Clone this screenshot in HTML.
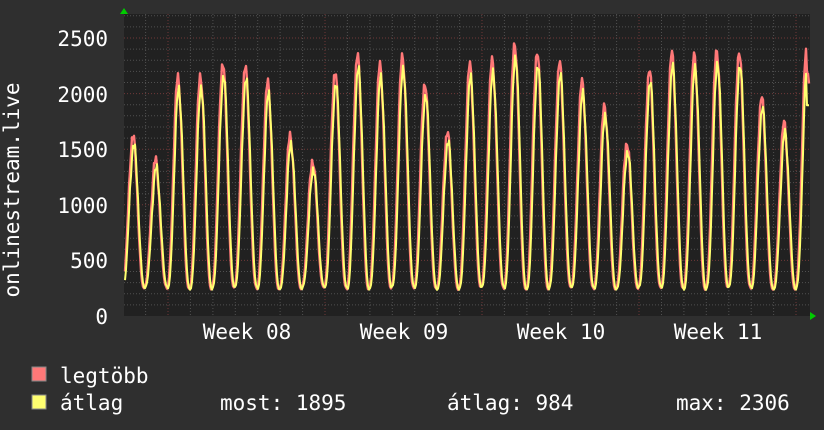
<!DOCTYPE html>
<html><head><meta charset="utf-8"><style>
body{margin:0;width:824px;height:430px;background:#2f2f2f;overflow:hidden;font-family:"DejaVu Sans Mono","Liberation Mono",monospace;}
svg{position:absolute;left:0;top:0}
text{font-family:"DejaVu Sans Mono","Liberation Mono",monospace;font-size:21px;fill:#fff}
</style></head><body>
<svg id="s" width="824" height="430" xmlns="http://www.w3.org/2000/svg">
<rect x="124" y="14" width="686" height="302" fill="#212121"/>
<g id="grid"></g>
<path id="red" fill="none" stroke="#ff7878" stroke-width="2.4" stroke-linejoin="round"/>
<path id="yel" fill="none" stroke="#ffff70" stroke-width="2" stroke-linejoin="round"/>
<polygon points="120,14 124,8 128,14" fill="#0c0"/>
<polygon points="810,312 816,316 810,320" fill="#0c0"/>
<g text-anchor="end">
<text x="108" y="46">2500</text><text x="108" y="102">2000</text><text x="108" y="157">1500</text>
<text x="108" y="213">1000</text><text x="108" y="268">500</text><text x="108" y="324">0</text>
</g>
<text transform="translate(19,190) rotate(-90)" text-anchor="middle">onlinestream.live</text>
<g text-anchor="middle">
<text x="247" y="339">Week 08</text><text x="404" y="339">Week 09</text>
<text x="561" y="339">Week 10</text><text x="718" y="339">Week 11</text>
</g>
<rect x="32" y="367" width="14" height="14" fill="#ff7878" stroke="#888" stroke-width="1"/>
<rect x="32" y="395" width="14" height="14" fill="#ffff70" stroke="#888" stroke-width="1"/>
<text x="60" y="383">legtöbb</text>
<text x="60" y="410">átlag</text>
<text x="220" y="410">most: 1895</text>
<text x="447" y="410">átlag: 984</text>
<text x="676" y="410">max: 2306</text>
</svg>
<script>
var g=document.getElementById('grid'),h='';
for(var v=100;v<=2700;v+=100){var y=316-v*0.1112;if(y<14)break;
h+='<line x1="124" x2="810" y1="'+y.toFixed(1)+'" y2="'+y.toFixed(1)+'" stroke="'+(v%500?'#505050':'#703838')+'" stroke-dasharray="1,2"/>';}
for(var k=-2;k<35;k++){var x=168+22.43*k;if(x<=124||x>=810)continue;
h+='<line y1="14" y2="316" x1="'+x.toFixed(1)+'" x2="'+x.toFixed(1)+'" stroke="'+(((k%7)+7)%7?'#505050':'#703838')+'" stroke-dasharray="1,2"/>';}
g.innerHTML=h;
var P=[1620,1400,2150,2170,2280,2240,2100,1630,1400,2200,2340,2260,2350,2100,1650,2260,2310,2460,2380,2280,2110,1900,1565,2220,2365,2350,2400,2385,1970,1735,2400];
function val(x,sc){var t=(x-133)/22.45;var k=Math.round(t);var kk=Math.max(0,Math.min(30,k));var ph=t-k;
var f=Math.pow((1+Math.cos(ph*2*Math.PI))/2,1.3);var base=250+15*Math.sin(k*1.7);
var n=Math.sin(x*2.3)*40*f*sc+Math.sin(x*0.9)*25*f;return base+(P[kk]*sc-base)*f+n;}
function path(sc,off){var d='';for(var x=125;x<=809;x+=1){var v=val(x-off,sc);if(sc<1&&x>806)v=Math.min(v,1895);if(sc==1&&x>806)v=Math.min(v,2180);var y=316-v*0.1112;d+=(x==125?'M':'L')+x+','+y.toFixed(1);}return d;}
document.getElementById('red').setAttribute('d',path(1,0));
document.getElementById('yel').setAttribute('d',path(0.95,0.8));
</script>
</body></html>
